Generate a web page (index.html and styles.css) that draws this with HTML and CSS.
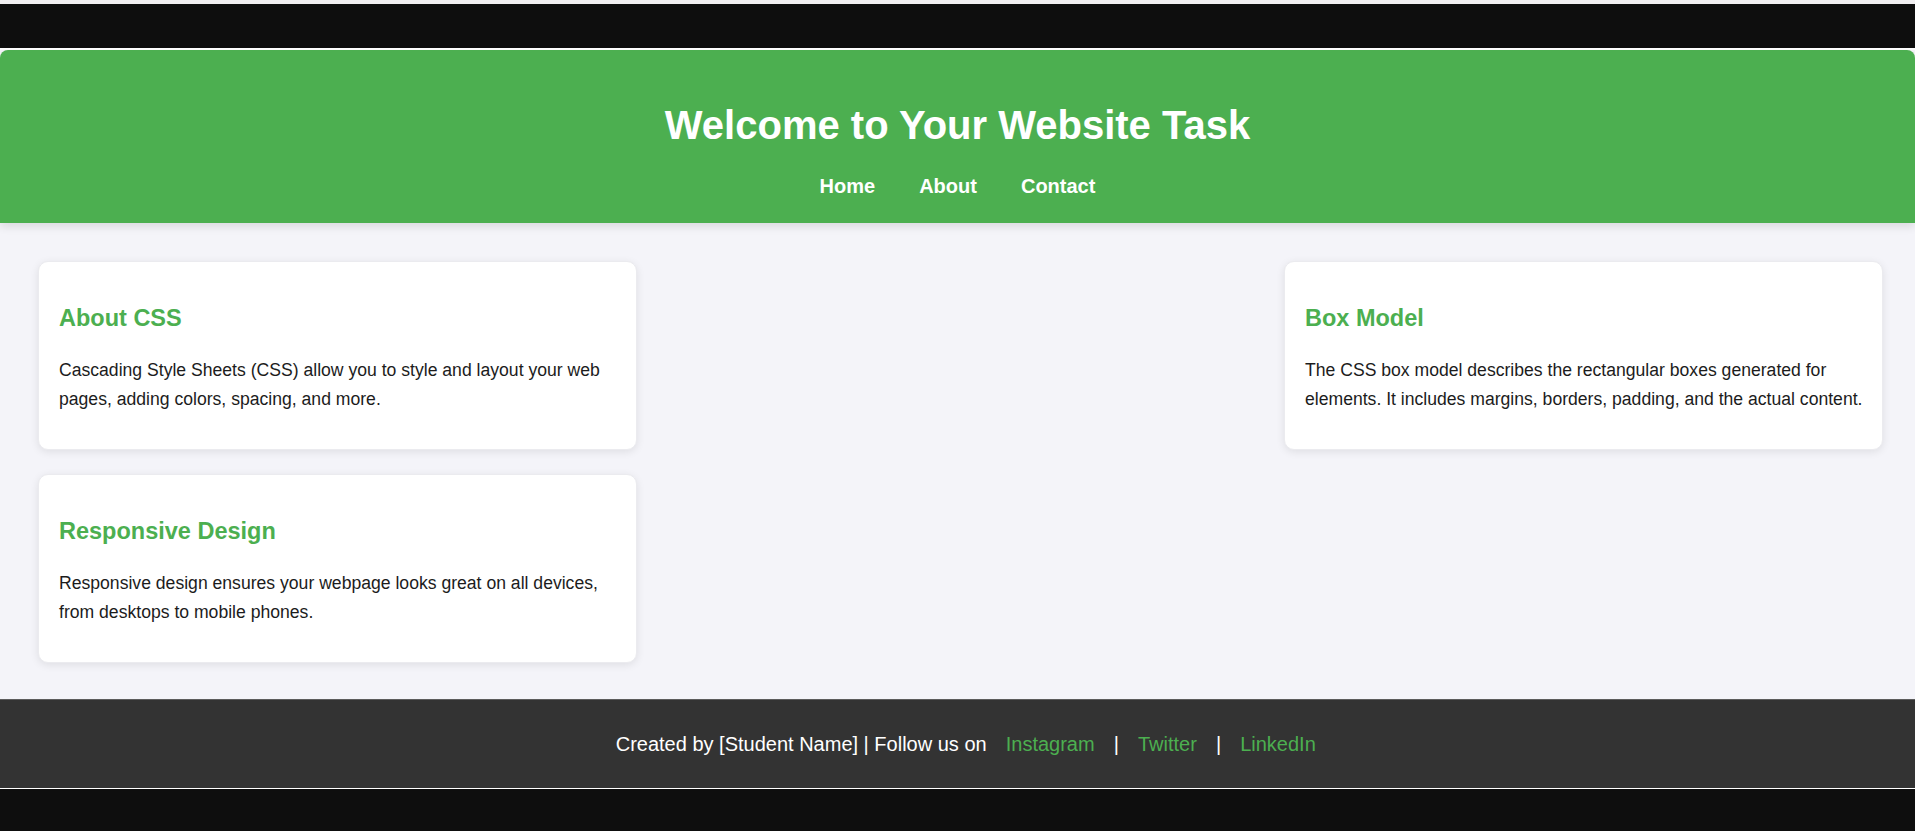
FILE: index.html
```html
<!DOCTYPE html>
<html lang="en">
<head>
<meta charset="utf-8">
<title>Welcome to Your Website Task</title>
<link rel="stylesheet" href="styles.css">
</head>
<body>
<div class="frame-top"></div>
<div class="page">
  <header class="site-header">
    <h1 class="site-title">Welcome to Your Website Task</h1>
    <nav class="site-nav">
      <a href="#" class="nav-link">Home</a>
      <a href="#" class="nav-link">About</a>
      <a href="#" class="nav-link">Contact</a>
    </nav>
  </header>
  <main class="content">
    <section class="card">
      <h2 class="card-title">About CSS</h2>
      <p class="card-text">Cascading Style Sheets (CSS) allow you to style and layout your web pages, adding colors, spacing, and more.</p>
    </section>
    <section class="card">
      <h2 class="card-title">Box Model</h2>
      <p class="card-text">The CSS box model describes the rectangular boxes generated for elements. It includes margins, borders, padding, and the actual content.</p>
    </section>
    <section class="card">
      <h2 class="card-title">Responsive Design</h2>
      <p class="card-text">Responsive design ensures your webpage looks great on all devices, from desktops to mobile phones.</p>
    </section>
  </main>
  <footer class="site-footer">
    <p class="footer-text">Created by [Student Name] | Follow us on <a href="#" class="footer-link">Instagram</a> | <a href="#" class="footer-link">Twitter</a> | <a href="#" class="footer-link">LinkedIn</a></p>
  </footer>
</div>
<div class="frame-bottom"></div>
</body>
</html>
```

FILE: styles.css
```css
html, body {
  margin: 0;
  padding: 0;
}

body {
  min-height: 100vh;
  display: flex;
  flex-direction: column;
  background: #0e0e0e;
  font-family: "Liberation Sans", Arial, sans-serif;
}

.frame-top {
  height: 44px;
  background: #0e0e0e;
  border-top: 4px solid #f1eff1;
  border-bottom: 2px solid #ffffff;
}

.page {
  background: #f4f4f9;
}

.site-header {
  background: #4caf50;
  color: #ffffff;
  text-align: center;
  height: 173px;
  box-sizing: border-box;
  padding-top: 53px;
  border-radius: 8px 8px 0 0;
  box-shadow: 0 4px 8px rgba(0, 0, 0, 0.1);
  position: relative;
}

.site-title {
  margin: 0;
  font-size: 40px;
  line-height: 45px;
  font-weight: bold;
}

.site-nav {
  margin-top: 27px;
  display: flex;
  justify-content: center;
  gap: 44px;
}

.nav-link {
  color: #ffffff;
  text-decoration: none;
  font-weight: bold;
  font-size: 20px;
  line-height: 23px;
}

.content {
  display: flex;
  flex-wrap: wrap;
  justify-content: space-between;
  column-gap: 40px;
  row-gap: 24px;
  padding: 38px 32px 36px 38px;
}

.card {
  flex: 0 0 599px;
  box-sizing: border-box;
  background: #ffffff;
  border-radius: 10px;
  padding: 20px 10px 20px 20px;
  box-shadow: 0 2px 9px rgba(0, 0, 0, 0.09);
  border: 1px solid #ebebef;
}

.card-title {
  margin: 23px 0 24px;
  color: #4caf50;
  font-size: 23.5px;
  line-height: 27px;
  font-weight: bold;
}

.card-text {
  margin: 0 0 15px;
  color: #1c1c1c;
  font-size: 17.6px;
  line-height: 29px;
}

.site-footer {
  background: #333333;
  color: #ffffff;
  text-align: center;
  height: 89px;
  box-sizing: border-box;
  border-top: 1px solid #5c5c5c;
  display: flex;
  align-items: center;
  justify-content: center;
}

.footer-text {
  margin: 0 0 0 30px;
  font-size: 20px;
  line-height: 23px;
}

.footer-link {
  color: #4caf50;
  text-decoration: none;
  margin: 0 13.5px;
}

.frame-bottom {
  flex: 1;
  background: #0e0e0e;
  border-top: 1px solid #ffffff;
}
```
